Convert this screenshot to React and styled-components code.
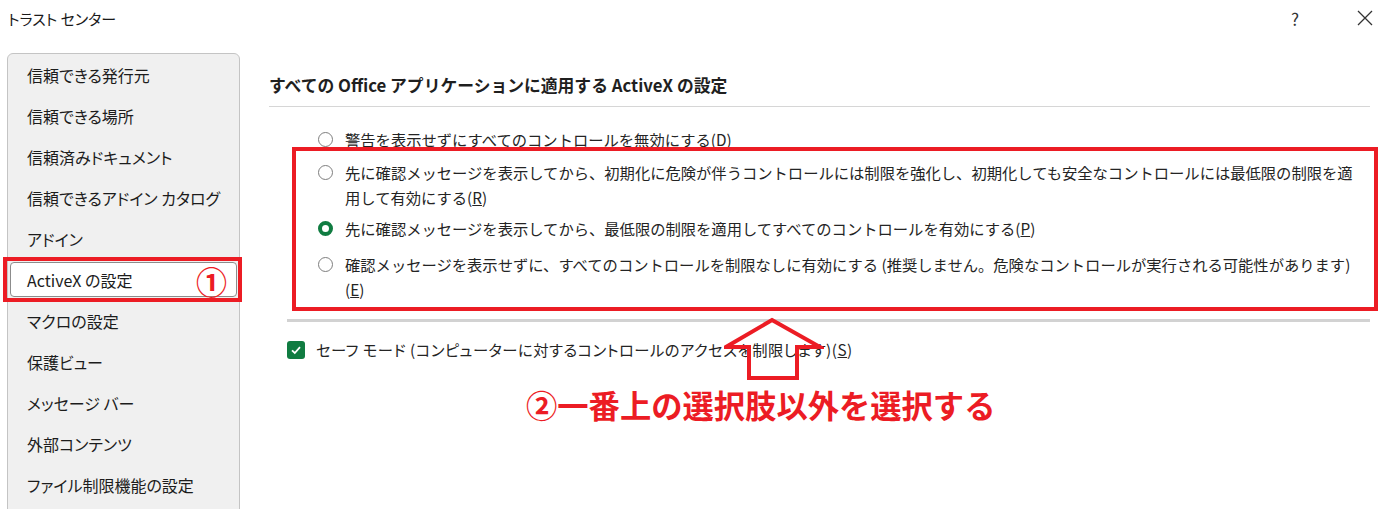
import React from "react";
import styled, { createGlobalStyle } from "styled-components";

const GlobalStyle = createGlobalStyle`
  html, body { margin: 0; padding: 0; background: #ffffff; }
  body {
    width: 1400px; height: 509px; overflow: hidden;
    font-family: "Noto Sans CJK JP", "Noto Sans", sans-serif;
    color: #242424;
  }
`;

const RED = "#ec1c24";
const GREEN = "#107c41";

const Window = styled.div`
  width: 1400px;
  height: 509px;
  display: flex;
  flex-direction: column;
  overflow: hidden;
`;

const TitleBar = styled.div`
  height: 36px;
  flex: none;
  display: flex;
  align-items: center;
  padding: 0 12px 0 8px;
`;

const Title = styled.div`
  flex: 1;
  font-size: 15px;
  font-feature-settings: "palt";
  color: #1a1a1a;
`;

const TitleButton = styled.div`
  width: 46px;
  height: 36px;
  display: flex;
  align-items: center;
  justify-content: center;
  font-size: 17px;
  color: #333;
  & + & { margin-left: 24px; }
`;

const Content = styled.div`
  flex: 1;
  display: flex;
  align-items: flex-start;
  min-height: 0;
`;

const Sidebar = styled.div`
  flex: none;
  width: 231px;
  margin: 17px 0 0 7px;
  border: 1px solid #c4c4c4;
  border-radius: 6px;
  background: #f0f0f0;
  padding-bottom: 40px;
`;

const NavItem = styled.div`
  position: relative;
  height: 41px;
  display: flex;
  align-items: center;
  padding-left: 19px;
  font-size: 16px;
  font-feature-settings: "palt";
  color: #1c1c1c;
  &::before {
    content: "";
    display: ${(p) => (p.$active ? "block" : "none")};
    position: absolute;
    left: 2px; right: 2px; top: 3px; bottom: 3px;
    background: #fff;
    border: 1px solid #8c8c8c;
    border-radius: 4px;
  }
`;

const NavLabel = styled.span`
  position: relative;
`;

const NavMark = styled.div`
  position: absolute;
  inset: -2px -3px -2px -5px;
  border: 4px solid ${RED};
  pointer-events: none;
`;

const CircledNum = styled.span`
  position: absolute;
  right: 12px;
  top: 50%;
  transform: translateY(-50%);
  font-size: 31px;
  font-weight: 700;
  line-height: 1;
  color: ${RED};
`;

const Main = styled.div`
  position: relative;
  flex: 1;
  margin-left: 29px;
  padding-right: 30px;
  padding-top: 37px;
`;

const Heading = styled.div`
  font-size: 16.8px;
  font-weight: 700;
  line-height: 24px;
  color: #1f1f1f;
`;

const Divider = styled.div`
  height: ${(p) => p.$thick}px;
  background: ${(p) => p.$color};
  margin: ${(p) => p.$mt}px 0 0 ${(p) => p.$ml}px;
`;

const RadioList = styled.div`
  margin-top: 20px;
  display: flex;
  flex-direction: column;
`;

const Option = styled.div`
  display: grid;
  grid-template-columns: 28px 1fr;
  padding-left: 48px;
  margin-top: ${(p) => p.$mt || 0}px;
  font-size: 15.3px;
  line-height: 25px;
  white-space: nowrap;
`;

const Radio = styled.span`
  width: 15px;
  height: 15px;
  margin-top: 5px;
  margin-left: 1px;
  box-sizing: border-box;
  border-radius: 50%;
  border: ${(p) => (p.$on ? `4px solid ${GREEN}` : "1.5px solid #7e7e7e")};
  background: #fff;
`;

const Marked = styled.div`
  position: relative;
  &::after {
    content: "";
    position: absolute;
    left: 23px; right: -8px; top: -5.5px; bottom: -8.5px;
    border: 4px solid ${RED};
    pointer-events: none;
  }
`;

const CheckRow = styled.div`
  display: flex;
  align-items: center;
  gap: 11px;
  margin: 15.5px 0 0 18px;
  font-size: 15.3px;
  font-feature-settings: "palt";
  letter-spacing: 0.5px;
  line-height: 25px;
  white-space: nowrap;
`;

const CheckBox = styled.span`
  width: 18px;
  height: 18px;
  border-radius: 3px;
  background: ${GREEN};
  display: flex;
  align-items: center;
  justify-content: center;
`;

const Callout = styled.div`
  margin: 23px 0 0 257px;
  font-size: 31.3px;
  font-weight: 700;
  line-height: 40px;
  color: ${RED};
  white-space: nowrap;
`;

const ArrowSvg = styled.svg`
  position: absolute;
  left: 455px;
  top: 281px;
  pointer-events: none;
`;

const navItems = [
  "信頼できる発行元",
  "信頼できる場所",
  "信頼済みドキュメント",
  "信頼できるアドイン カタログ",
  "アドイン",
  "ActiveX の設定",
  "マクロの設定",
  "保護ビュー",
  "メッセージ バー",
  "外部コンテンツ",
  "ファイル制限機能の設定",
];

export default function App() {
  return (
    <Window>
      <GlobalStyle />
      <TitleBar>
        <Title>トラスト センター</Title>
        <TitleButton>?</TitleButton>
        <TitleButton>
          <svg width="16" height="16" viewBox="0 0 16 16">
            <path d="M1 1 L15 15 M15 1 L1 15" stroke="#333" strokeWidth="1.3" fill="none" />
          </svg>
        </TitleButton>
      </TitleBar>
      <Content>
        <Sidebar>
          {navItems.map((label, i) => (
            <NavItem key={label} $active={i === 5}>
              <NavLabel>{label}</NavLabel>
              {i === 5 && (
                <>
                  <NavMark />
                  <CircledNum>①</CircledNum>
                </>
              )}
            </NavItem>
          ))}
        </Sidebar>
        <Main>
          <Heading>すべての Office アプリケーションに適用する ActiveX の設定</Heading>
          <Divider $thick={1} $color="#d6d6d6" $mt={9} $ml={0} />
          <RadioList>
            <Option>
              <Radio />
              <span>警告を表示せずにすべてのコントロールを無効にする(<u>D</u>)</span>
            </Option>
            <Marked>
              <Option $mt={8}>
                <Radio />
                <span>
                  先に確認メッセージを表示してから、初期化に危険が伴うコントロールには制限を強化し、初期化しても安全なコントロールには最低限の制限を適
                  <br />
                  用して有効にする(<u>R</u>)
                </span>
              </Option>
              <Option $mt={6}>
                <Radio $on />
                <span>先に確認メッセージを表示してから、最低限の制限を適用してすべてのコントロールを有効にする(<u>P</u>)</span>
              </Option>
              <Option $mt={11}>
                <Radio />
                <span>
                  確認メッセージを表示せずに、すべてのコントロールを制限なしに有効にする (推奨しません。危険なコントロールが実行される可能性があります)
                  <br />
                  (<u>E</u>)
                </span>
              </Option>
            </Marked>
          </RadioList>
          <Divider $thick={3} $color="#d2d2d2" $mt={16.5} $ml={18} />
          <CheckRow>
            <CheckBox>
              <svg width="12" height="12" viewBox="0 0 12 12">
                <path d="M2 6.3 L4.8 9 L10 3.2" stroke="#fff" strokeWidth="1.8" fill="none" />
              </svg>
            </CheckBox>
            <span>セーフ モード (コンピューターに対するコントロールのアクセスを制限します)(<u>S</u>)</span>
          </CheckRow>
          <Callout>②一番上の選択肢以外を選択する</Callout>
          <ArrowSvg width="100" height="64" viewBox="0 0 100 64">
            <polygon
              points="48,3 96,30 73,30 73,61 25,61 25,30 2,30"
              fill="none"
              stroke={RED}
              strokeWidth="4"
              strokeLinejoin="miter"
            />
          </ArrowSvg>
        </Main>
      </Content>
    </Window>
  );
}
